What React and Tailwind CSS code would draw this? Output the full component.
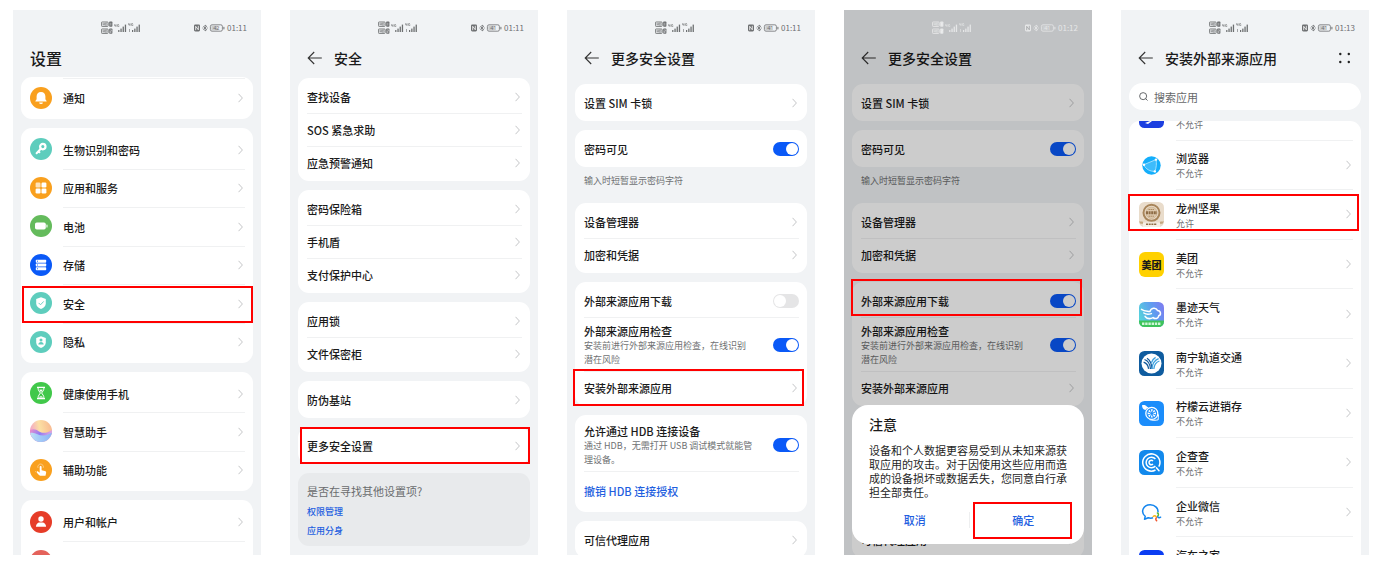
import React from "react";

/* ---------- shared glyphs ---------- */

function Chevron() {
  return (
    <svg className="mr-0.5 h-2.5 w-[5px] shrink-0" viewBox="0 0 5 10" fill="none" stroke="#c4c5c7" strokeWidth="1">
      <path d="M0.5 0.8 4.4 5 0.5 9.2" />
    </svg>
  );
}

function HdMark({ y, n }) {
  return (
    <g>
      <rect x="0.4" y={y} width="6.8" height="4.4" rx="0.8" fill="none" strokeWidth="0.9" stroke="currentColor" />
      <path d={`M2 ${y + 1}v2.400M3.400 ${y + 1}v2.400M2 ${y + 2.200}h1.400M4.600 ${y + 1}h.6q.8 .1 .8 1.200t-.8 1.200h-.6z`} fill="none" stroke="currentColor" strokeWidth="0.6" />
      <rect x="8.2" y={y - 0.4} width="3.2" height="5.2" rx="0.7" fill="currentColor" />
      <path d={n === 1 ? `M9.800 ${y + 0.8}v2.800` : `M9.200 ${y + 0.8}h1.200v1.400H9.200v1.400h1.200`} stroke="#f1f3f5" strokeWidth="0.5" fill="none" />
    </g>
  );
}

function Bars({ x }) {
  return (
    <g fill="currentColor">
      <rect x={x} y="9" width="1.2" height="2" />
      <rect x={x + 2.2} y="7.6" width="1.3" height="3.4" />
      <rect x={x + 4.4} y="5.6" width="1.3" height="5.4" />
      <rect x={x + 6.6} y="3.6" width="1.3" height="7.4" />
    </g>
  );
}

function StatusBar({ time, battery, light }) {
  return (
    <div className={"relative z-10 flex h-9 items-center justify-between pr-3.5 pl-[88px] " + (light ? "text-[#e6e7e8]" : "text-[#6d6f71]")}>
      <svg className="h-[14px] w-10" viewBox="0 0 40 14">
        <HdMark y={1} n={1} />
        <HdMark y={8} n={2} />
        <path d="M13.6 3.2v1.600h1.600M15 3.200v2.600M18 3.600h-1.400v1.800H18v-.8" fill="none" stroke="currentColor" strokeWidth="0.6" />
        <Bars x={17.2} />
        <path d="M27.600 2.200v1.600h1.600M29 2.200v2.600M32 2.600h-1.400v1.800H32v-.8M28.500 8v3" fill="none" stroke="currentColor" strokeWidth="0.6" />
        <Bars x={31} />
      </svg>
      <div className="flex items-center gap-0.5">
        <svg className="h-2 w-[31px]" viewBox="0 0 31 8">
          <rect x="0" y="0.6" width="6" height="6.8" rx="1.300" fill="currentColor" />
          <path d="M1.700 6.200V2.300L4.300 5.800V1.800" fill="none" stroke={light ? "#a0a1a3" : "#fff"} strokeWidth="0.8" />
          <path d="M9.200 2.300 12.800 5.600 11 7V1L12.800 2.400 9.200 5.700M8.400 4h.8M13 4h.8" fill="none" stroke="currentColor" strokeWidth="0.8" />
          <rect x="16.400" y="0.800" width="12" height="6.400" rx="1.600" fill="none" stroke="currentColor" strokeWidth="0.8" />
          <rect x="17.400" y="1.800" width={battery / 7} height="4.400" fill="currentColor" opacity="0.3" />
          <rect x="29.400" y="2.700" width="1" height="2.700" rx="0.400" fill="currentColor" />
          <text x="22.300" y="5.900" fontSize="5.500" textAnchor="middle" fill="currentColor" fontFamily="Noto Sans, sans-serif">{battery}</text>
        </svg>
        <span className="text-[8px] leading-none">{time}</span>
      </div>
    </div>
  );
}

/* ---------- layout parts ---------- */

function Highlight({ className }) {
  return <div className={"pointer-events-none absolute z-20 h-[37px] border-2 border-[#ff0000] " + className} />;
}

function Phone({ time = "01:11", battery = 41, light, title, back = true, actions, children, overlay }) {
  return (
    <section className="relative aspect-[248/545] overflow-hidden bg-[#f1f3f5]">
      <StatusBar time={time} battery={battery} light={light} />
      <header className="flex h-6 items-center px-[17px]">
        {back && (
          <button type="button" aria-label="返回" className="mr-2.5 -ml-px">
            <svg className="h-4 w-[18px]" viewBox="0 0 18 16" fill="none" stroke="#333" strokeWidth="1.1">
              <path d="M8.200 2 2.200 8l6 6M2.200 8h13.600" />
            </svg>
          </button>
        )}
        <h2 className={back ? "text-sm font-medium" : "text-base font-medium"}>{title}</h2>
        {actions}
      </header>
      {children}
      {overlay}
    </section>
  );
}

function Card({ className = "py-0.5", children }) {
  return <div className={"rounded-[11px] bg-white " + className}>{children}</div>;
}

function Row({ label, color = "text-[#1a1a1a]", height = "h-[33px]", chevron = true }) {
  return (
    <button type="button" className={"group/row flex w-full pr-2 pl-[9px] text-left " + height}>
      <span className="flex flex-1 items-center justify-between self-stretch border-t border-[#f0f1f2] group-first/row:border-transparent">
        <span className={"text-[11px] leading-4 font-medium " + color}>{label}</span>
        {chevron && <Chevron />}
      </span>
    </button>
  );
}

function ToggleRow({ label, note, on }) {
  return (
    <label className={"group/row flex w-full pr-2 pl-[9px] " + (note ? "h-[54px]" : "h-[33px]")}>
      <span className="flex flex-1 items-center justify-between self-stretch border-t border-[#f0f1f2] group-first/row:border-transparent">
        <span>
          <span className="block text-[11px] leading-4 font-medium text-[#1a1a1a]">{label}</span>
          {note && <span className="block text-[9px] leading-[14px] whitespace-pre-line text-[#6f7173]">{note}</span>}
        </span>
        <input
          type="checkbox"
          defaultChecked={on}
          className="h-3.5 w-[26px] shrink-0 appearance-none rounded-full bg-[#e5e5e6] p-px before:block before:size-3 before:rounded-full before:bg-white before:content-[''] checked:bg-[#0a59f7] checked:before:ml-3"
        />
      </span>
    </label>
  );
}

/* ---------- first screen ---------- */

const disc = (fill, glyph) => (
  <svg className="size-[22px] shrink-0" viewBox="0 0 22 22">
    <circle cx="11" cy="11" r="11" fill={fill} />
    {glyph}
  </svg>
);

const shield = "M11 5.2 15.8 7v4.2c0 2.8-1.9 4.7-4.8 5.8-2.9-1.1-4.8-3-4.8-5.8V7z";

const icons = {
  bell: disc("#f9a01e", (
    <g fill="#fff">
      <path d="M11 5c2.800 0 4.400 2 4.400 4.400v2.800l1.200 1.700v.6H5.400v-.6l1.200-1.700V9.400C6.600 7 8.200 5 11 5z" />
      <path d="M9.100 15.400h3.800a1.900 1.700 0 0 1-3.800 0z" />
    </g>
  )),
  key: disc("#5ecdbd", (
    <g>
      <circle cx="12.800" cy="8.600" r="2.700" fill="none" stroke="#fff" strokeWidth="2.200" />
      <path d="M11 10.500 6.600 15.200M8.400 13.300l1 1" stroke="#fff" strokeWidth="2" strokeLinecap="round" />
    </g>
  )),
  grid: disc("#f9a01e", (
    <g fill="#fff">
      <rect x="5.600" y="5.600" width="4.900" height="4.900" rx="1.200" opacity="0.7" />
      <rect x="11.500" y="5.600" width="4.900" height="4.900" rx="1.200" />
      <rect x="5.600" y="11.500" width="4.900" height="4.900" rx="1.200" />
      <rect x="11.500" y="11.500" width="4.900" height="4.900" rx="1.200" />
    </g>
  )),
  battery: disc("#64bb5c", (
    <g fill="#fff">
      <rect x="5" y="7.500" width="10.800" height="7" rx="1.800" />
      <rect x="16.400" y="9.600" width="1.100" height="2.800" rx="0.500" />
    </g>
  )),
  storage: disc("#0a59f7", (
    <g>
      <g fill="#fff">
        <rect x="5.800" y="5.700" width="10.400" height="3.100" rx="0.700" />
        <rect x="5.800" y="9.450" width="10.400" height="3.100" rx="0.700" />
        <rect x="5.800" y="13.200" width="10.400" height="3.100" rx="0.700" />
      </g>
      <path d="M7 7.200h1M7 11h1M7 14.800h1" stroke="#0a59f7" strokeWidth="0.900" />
    </g>
  )),
  shieldCheck: disc("#5ecdbd", (
    <g>
      <path d={shield} fill="#fff" />
      <path d="m8.600 10.900 1.900 1.900 3.200-3.400" fill="none" stroke="#5ecdbd" strokeWidth="0.900" />
    </g>
  )),
  shieldUser: disc("#5ecdbd", (
    <g>
      <path d={shield} fill="#fff" />
      <circle cx="11" cy="9" r="1.500" fill="#5ecdbd" />
      <path d="M8.300 13.600c0-3.400 5.400-3.400 5.400 0z" fill="#5ecdbd" />
    </g>
  )),
  hourglass: disc("#41c84a", (
    <g fill="none" stroke="#fff" strokeWidth="1">
      <path d="M7 5.400h8M7 16.600h8" strokeWidth="1.300" />
      <path d="M8 5.600c0 3 1.600 4 2.400 5.400C9.600 12.400 8 13.400 8 16.400M14 5.600c0 3-1.600 4-2.400 5.400.8 1.400 2.400 2.400 2.400 5.400" />
      <path d="M9.500 7.800h3L11 10zM9 15.600c.3-1.600 3.700-1.600 4 0z" fill="#fff" strokeWidth="0.300" />
    </g>
  )),
  assistant: (
    <svg className="size-[22px] shrink-0" viewBox="0 0 22 22">
      <defs>
        <linearGradient id="sky" x1="0" y1="0.500" x2="1" y2="0.300">
          <stop offset="0" stopColor="#f3a3c9" />
          <stop offset="0.450" stopColor="#fbe0a4" />
          <stop offset="1" stopColor="#f8b890" />
        </linearGradient>
        <linearGradient id="sea" x1="0" y1="0" x2="1" y2="0.300">
          <stop offset="0" stopColor="#f090c8" />
          <stop offset="0.500" stopColor="#8f7df5" />
          <stop offset="1" stopColor="#e9a6dc" />
        </linearGradient>
        <linearGradient id="foam" x1="0" y1="0" x2="1" y2="0">
          <stop offset="0" stopColor="#bfeaf6" />
          <stop offset="1" stopColor="#7fb4fa" />
        </linearGradient>
        <clipPath id="orb"><circle cx="11" cy="11" r="11" /></clipPath>
      </defs>
      <g clipPath="url(#orb)">
        <rect width="22" height="22" fill="url(#sky)" />
        <path d="M0 10c4-1.500 6-.5 9 1.500s8 2 13-1.500v12H0z" fill="url(#sea)" />
        <path d="M0 13c5-1.500 8 2.500 13 2.500 4 0 6-1.500 9-3v10H0z" fill="url(#foam)" opacity="0.900" />
      </g>
    </svg>
  ),
  touch: disc("#f9a01e", (
    <g>
      <path d="M10 16.800c-1.200-1-2.600-2.300-3.200-3.400-.4-.9.600-1.400 1.300-.8l1.600 1.200V7.900c0-1.300 1.900-1.300 1.900 0v3.400l3.200.6c1.200.3 1.500 1 1.300 2l-.6 2.900z" fill="#fff" />
      <path d="M8 8.900a2.800 2.800 0 1 1 5.200 0M6 13.200l-.6-1" fill="none" stroke="#fff" strokeWidth="0.600" opacity="0.700" />
    </g>
  )),
  user: disc("#e63c28", (
    <g fill="#fff">
      <circle cx="11" cy="8" r="2.700" />
      <path d="M5.900 15.800c0-3 2-4 3.400-4.300h3.400c1.400.3 3.400 1.300 3.400 4.300z" />
    </g>
  )),
  blank: disc("#e4625b", null),
};

function IconRow({ icon, label, topLine }) {
  return (
    <button type="button" className="group/row flex w-full items-center gap-[11px] pr-2 pl-[9px] text-left">
      {icons[icon]}
      <span className={"flex flex-1 items-center justify-between self-stretch border-t border-[#f0f1f2] " + (topLine ? "" : "group-first/row:border-transparent")}>
        <span className="text-[11px] leading-4 font-medium text-[#1a1a1a]">{label}</span>
        <Chevron />
      </span>
    </button>
  );
}

function SettingsScreen() {
  return (
    <Phone title="设置" back={false} battery={42} overlay={<Highlight className="top-[276px] right-2 left-[9px]" />}>
      <div className="mt-[7px] flex flex-col gap-[9px] px-2">
        <Card className="grid h-[42px] pt-px pb-0.5">
          <IconRow icon="bell" label="通知" topLine />
        </Card>
        <Card className="grid h-[235px] auto-rows-fr py-0.5">
          <IconRow icon="key" label="生物识别和密码" />
          <IconRow icon="grid" label="应用和服务" />
          <IconRow icon="battery" label="电池" />
          <IconRow icon="storage" label="存储" />
          <IconRow icon="shieldCheck" label="安全" />
          <IconRow icon="shieldUser" label="隐私" />
        </Card>
        <Card className="grid h-[119px] auto-rows-fr py-0.5">
          <IconRow icon="hourglass" label="健康使用手机" />
          <IconRow icon="assistant" label="智慧助手" />
          <IconRow icon="touch" label="辅助功能" />
        </Card>
        <Card className="grid h-[82px] auto-rows-fr py-0.5">
          <IconRow icon="user" label="用户和帐户" />
          <IconRow icon="blank" label="" />
        </Card>
      </div>
    </Phone>
  );
}

/* ---------- second screen ---------- */

function SecurityScreen() {
  return (
    <Phone title="安全" overlay={<Highlight className="top-[417px] right-2 left-2.5" />}>
      <div className="mt-2 flex flex-col gap-[9px] px-2">
        <Card>
          <Row label="查找设备" />
          <Row label="SOS 紧急求助" />
          <Row label="应急预警通知" />
        </Card>
        <Card>
          <Row label="密码保险箱" />
          <Row label="手机盾" />
          <Row label="支付保护中心" />
        </Card>
        <Card>
          <Row label="应用锁" />
          <Row label="文件保密柜" />
        </Card>
        <Card>
          <Row label="防伪基站" />
        </Card>
        <Card>
          <Row label="更多安全设置" />
        </Card>
        <div className="flex flex-col items-start rounded-[11px] bg-[#e8eaec] pt-2 pr-2 pb-1.5 pl-[9px]">
          <p className="text-[11px] leading-[21px] text-[#6a6c6e]">是否在寻找其他设置项?</p>
          <a href="#permissions" className="text-[9px] leading-[19px] font-medium text-[#1f5fe0]">权限管理</a>
          <a href="#twin" className="text-[9px] leading-[19px] font-medium text-[#1f5fe0]">应用分身</a>
        </div>
      </div>
    </Phone>
  );
}

/* ---------- third and fourth screens ---------- */

function MoreSecurity({ download }) {
  return (
    <div className="mt-3.5 flex flex-col gap-[9px] px-2">
      <Card>
        <Row label="设置 SIM 卡锁" />
      </Card>
      <div>
        <Card>
          <ToggleRow label="密码可见" on />
        </Card>
        <p className="pr-2 pl-[9px] text-[9px] leading-[27px] text-[#6f7173]">输入时短暂显示密码字符</p>
      </div>
      <Card>
        <Row label="设备管理器" />
        <Row label="加密和凭据" />
      </Card>
      <Card>
        <ToggleRow label="外部来源应用下载" on={download} />
        <ToggleRow label="外部来源应用检查" note={"安装前进行外部来源应用检查，在线识别\n潜在风险"} on />
        <Row label="安装外部来源应用" />
      </Card>
      <Card>
        <ToggleRow label="允许通过 HDB 连接设备" note={"通过 HDB，无需打开 USB 调试模式就能管\n理设备。"} on />
        <Row label="撤销 HDB 连接授权" color="text-[#1f5fe0]" height="h-[39px]" chevron={false} />
      </Card>
      <Card>
        <Row label="可信代理应用" />
      </Card>
    </div>
  );
}

function NoticeDialog() {
  return (
    <>
      <div className="absolute inset-0 bg-black/20" />
      <div role="dialog" aria-label="注意" className="absolute inset-x-2 bottom-[11px] z-10 rounded-2xl bg-white pt-2 pr-[15px] pb-2.5 pl-[17px]">
        <h3 className="text-sm leading-[22px] font-medium text-[#1a1a1a]">注意</h3>
        <p className="mt-2 text-[11px] leading-[14px] text-[#1f1f1f]">
          设备和个人数据更容易受到从未知来源获取应用的攻击。对于因使用这些应用而造成的设备损坏或数据丢失，您同意自行承担全部责任。
        </p>
        <div className="mt-[7px] flex h-7 items-center text-[11px] font-medium text-[#1f5fe0]">
          <button type="button" className="flex-1 pr-2">取消</button>
          <span className="h-4 w-px bg-[#eeeff0]" />
          <button type="button" className="flex-1 pl-2">确定</button>
        </div>
      </div>
      <Highlight className="top-[269px] right-2.5 left-[7px]" />
      <Highlight className="top-[492px] right-5 left-[129px]" />
    </>
  );
}

/* ---------- fifth screen ---------- */

const tile = (fill, glyph) => (
  <svg className="size-[25px] shrink-0" viewBox="0 0 25 25">
    <rect width="25" height="25" rx="5.500" fill={fill} />
    {glyph}
  </svg>
);

const spokes = [0, 45, 90, 135, 180, 225, 270, 315];

const apps = [
  { name: "", status: "不允许", icon: tile("#1c3fe0", <path d="M6 20 15 16.500 9 21z" fill="#fff" />) },
  {
    name: "浏览器",
    status: "不允许",
    icon: tile("#fff", (
      <g>
        <circle cx="12.500" cy="12.500" r="9.200" fill="#14aefb" />
        <path d="M4.600 11.800 17 6.600C17.800 10 17.400 15 15.800 18.400 11 18.400 7 16.400 4.600 11.800z" fill="#3dbcfc" stroke="#bdeaff" strokeWidth="0.800" />
        <circle cx="17" cy="6.600" r="1.200" fill="#fff" />
        <circle cx="15.800" cy="18.400" r="1.200" fill="#fff" />
        <circle cx="5" cy="11.700" r="1.200" fill="#fff" />
      </g>
    )),
  },
  {
    name: "龙州坚果",
    status: "允许",
    icon: tile("#e9dccb", (
      <g>
        <circle cx="12.500" cy="10.800" r="8" fill="none" stroke="#a8855a" strokeWidth="2" />
        <circle cx="12.500" cy="10.800" r="5.700" fill="#ddc9ad" stroke="#c3a67f" strokeWidth="0.600" />
        <path d="M7 10.800h11" stroke="#8e6c45" strokeWidth="3" strokeDasharray="2 0.600" />
        <path d="M9.500 7.500h6M9.500 14.200h6" stroke="#a8855a" strokeWidth="0.900" strokeDasharray="1.500 0.500" />
        <path d="M0 19.500h3.500l1 1.500h16l1-1.500H25l-1.500 2.200H1.500z" fill="#c3a67f" />
        <path d="M4 20.500h17V25H4z" fill="#f5eee4" />
        <path d="M7 22.300h11" stroke="#8e6c45" strokeWidth="1.500" strokeDasharray="2 0.700" />
      </g>
    )),
  },
  {
    name: "美团",
    status: "不允许",
    icon: (
      <span className="flex size-[25px] shrink-0 items-center justify-center rounded-md bg-[#ffd100] text-[10px] leading-none font-black text-[#1a1a1a]">美团</span>
    ),
  },
  {
    name: "墨迹天气",
    status: "不允许",
    icon: tile("url(#moji)", (
      <g>
        <defs>
          <linearGradient id="moji" x1="0" y1="0.600" x2="1" y2="0.200">
            <stop offset="0" stopColor="#55d3dc" />
            <stop offset="0.600" stopColor="#5f9bf0" />
            <stop offset="1" stopColor="#7d7df0" />
          </linearGradient>
        </defs>
        <path d="M0 18.500h25v1a5.500 5.500 0 0 1-5.500 5.500h-14A5.500 5.500 0 0 1 0 19.500z" fill="#3fc45a" />
        <path d="M2.500 7.400c3 2.200 5.600 1.600 8.400 2.200 1-4 6-4.600 7.600-1.200 3.400.2 4 4.400 1.200 5.400-.2 2.800-3.600 3.600-5.600 1.800-3 1.600-6.300.8-8-1.200M4.800 11c2.600 1.800 5.400 1.400 7.600.600" fill="none" stroke="#fff" strokeWidth="1.500" strokeLinecap="round" strokeLinejoin="round" />
        <path d="M3 21.700h19" stroke="#eaffef" strokeWidth="2.600" strokeDasharray="2.400 0.800" opacity="0.850" />
      </g>
    )),
  },
  {
    name: "南宁轨道交通",
    status: "不允许",
    icon: tile("#0f5c9f", (
      <g>
        <circle cx="12.500" cy="12.500" r="10" fill="#fff" />
        <g fill="none" strokeWidth="1.300">
          <path d="M5.500 8.500c4 1.300 5.600 4.500 6 9.500M8 7.200c3 1.800 4.600 5 5 10.800M4.600 11.200c3 1 4.600 3.300 5 6.600" stroke="#135a9c" />
          <path d="M19.600 7.600c-4 1.500-6.200 4.600-6.800 10.400M20.400 10c-3 1-5.200 3.600-5.600 8M16.600 6.400c-2 1-3.400 3-4.200 5.400" stroke="#3fa2df" />
        </g>
      </g>
    )),
  },
  {
    name: "柠檬云进销存",
    status: "不允许",
    icon: tile("#1b8dfb", (
      <g>
        <path d="M3 4.200c2.200-.6 4 0 5 1.600l1.800.8c-1.500.4-2.600 1.300-3.300 2.500C4.300 8.500 3 6.800 3 4.200z" fill="#fff" />
        <circle cx="12.800" cy="12.400" r="6" fill="none" stroke="#fff" strokeWidth="1.300" />
        {spokes.map((a) => (
          <path key={a} d="M12.800 11.400 11.700 8.200h2.200z" fill="#fff" transform={`rotate(${a} 12.800 12.400)`} />
        ))}
        <path d="M10.500 18.600c3 1 6 .8 8.700.2-.2-1.800.3-3.600.3-5.400" fill="none" stroke="#fff" strokeWidth="1" />
      </g>
    )),
  },
  {
    name: "企查查",
    status: "不允许",
    icon: tile("#1289ec", (
      <g fill="none" stroke="#fff" strokeWidth="1.500">
        <path d="M16.500 20a8.600 8.600 0 1 1 3.300-3.300" />
        <path d="M16.400 9a5.300 5.300 0 1 0 0 7" />
        <path d="M14 10.900a2.300 2.300 0 1 0 0 3.200" />
        <path d="M17.400 17.800 20 20.800" strokeLinecap="round" />
      </g>
    )),
  },
  {
    name: "企业微信",
    status: "不允许",
    icon: tile("#fff", (
      <g>
        <path d="M14 17.800c-1.500.5-3.300.4-4.800-.1L5.500 19.300l.7-3C1.300 12.300 3.900 4.800 11.200 4.800c5 0 8.200 3.600 7.800 7.600" fill="none" stroke="#1485ee" strokeWidth="1.500" strokeLinejoin="round" />
        <path d="M18.400 13c1.500.5 1.200 2.200.2 3.200" fill="none" stroke="#57b53a" strokeWidth="1.500" strokeLinecap="round" />
        <path d="M21.600 17.200c-1.300.9-2.300.5-3-.4" fill="none" stroke="#1485ee" strokeWidth="1.500" strokeLinecap="round" />
        <path d="M17.600 20.700c-1.200-1-.9-2.200-.2-3" fill="none" stroke="#f0542c" strokeWidth="1.500" strokeLinecap="round" />
        <path d="M14.200 16.500c1-.9 2.200-.7 3 0" fill="none" stroke="#fbb314" strokeWidth="1.500" strokeLinecap="round" />
      </g>
    )),
  },
  { name: "汽车之家", status: "不允许", icon: tile("#0b3df2", null) },
];

function AppRow({ icon, name, status }) {
  return (
    <li className="flex items-center gap-3 pr-2 pl-2.5">
      {icon}
      <button type="button" className="flex flex-1 items-center justify-between self-stretch border-b border-[#f0f1f2] text-left">
        <span className="pt-[3px]">
          <span className="block h-[15px] text-[11px] leading-[15px] font-medium text-[#1a1a1a]">{name}</span>
          <span className="block text-[9px] leading-[15px] text-[#6f7173]">{status}</span>
        </span>
        <Chevron />
      </button>
    </li>
  );
}

function SourcesScreen() {
  return (
    <Phone
      title="安装外部来源应用"
      time="01:13"
      actions={
        <button type="button" aria-label="更多" className="ml-auto">
          <svg className="size-3.5" viewBox="0 0 14 14" fill="#222">
            <circle cx="2.300" cy="3" r="1.200" />
            <circle cx="10.800" cy="3" r="1.200" />
            <circle cx="2.300" cy="11" r="1.200" />
            <circle cx="10.800" cy="11" r="1.200" />
          </svg>
        </button>
      }
      overlay={<Highlight className="top-[184px] right-2.5 left-[7px]" />}
    >
      <div className="mt-[13px] px-2">
        <label className="flex h-[27px] items-center gap-1.5 rounded-full bg-white px-2.5">
          <svg className="size-[9px] shrink-0" viewBox="0 0 10 10" fill="none" stroke="#55585a" strokeWidth="1">
            <circle cx="4.600" cy="4.600" r="3.900" />
            <path d="m7.300 7.300 2.200 2.200" />
          </svg>
          <input type="search" aria-label="搜索应用" placeholder="搜索应用" className="w-full min-w-0 bg-transparent text-[11px] leading-4 outline-none placeholder:text-[#66686a]" />
        </label>
        <div className="mt-[11px] overflow-hidden rounded-t-[11px] bg-white">
          <ul className="-mt-[30px] grid h-[496px] auto-rows-fr">
            {apps.map((app) => (
              <AppRow key={app.name} {...app} />
            ))}
          </ul>
        </div>
      </div>
    </Phone>
  );
}

export default function App() {
  return (
    <main className="grid grid-cols-5 gap-[29px] bg-white pt-2.5 pr-[15px] pb-7 pl-[13px] font-['Noto_Sans_CJK_SC','Noto_Sans',sans-serif] text-[#1a1a1a]">
      <SettingsScreen />
      <SecurityScreen />
      <Phone title="更多安全设置" overlay={<Highlight className="top-[359px] right-[11px] left-1.5" />}>
        <MoreSecurity download={false} />
      </Phone>
      <Phone title="更多安全设置" time="01:12" light overlay={<NoticeDialog />}>
        <MoreSecurity download />
      </Phone>
      <SourcesScreen />
    </main>
  );
}
